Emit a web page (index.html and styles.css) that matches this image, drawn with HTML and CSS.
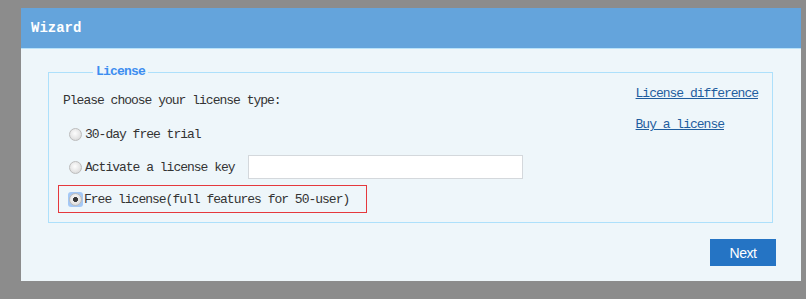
FILE: index.html
```html
<!DOCTYPE html>
<html lang="en">
<head>
    <meta charset="UTF-8">
    <meta name="viewport" content="width=device-width, initial-scale=1.0">
    <title>Wizard - License</title>
    <link rel="stylesheet" href="styles.css">
</head>
<body>
    <div class="panel">
        <div class="panel-header">Wizard</div>

        <div class="panel-body">
            <fieldset class="license-box">
                <legend>License</legend>

                <div class="license-layout">
                    <div class="license-options">
                        <p class="prompt">Please choose your license type:</p>

                        <label class="option">
                            <input type="radio" name="license">
                            <span>30-day free trial</span>
                        </label>

                        <label class="option">
                            <input type="radio" name="license">
                            <span>Activate a license key</span>
                            <input type="text" class="key-input">
                        </label>

                        <label class="option option-selected">
                            <span class="radio-focus"><input type="radio" name="license" checked></span>
                            <span>Free license(full features for 50-user)</span>
                        </label>
                    </div>

                    <div class="license-links">
                        <a href="#">License difference</a>
                        <a href="#">Buy a license</a>
                    </div>
                </div>
            </fieldset>

            <div class="actions">
                <button type="button" class="next-btn">Next</button>
            </div>
        </div>
    </div>
</body>
</html>
```

FILE: styles.css
```css
* {
    margin: 0;
    padding: 0;
    box-sizing: border-box;
}

body {
    height: 299px;
    overflow: hidden;
    background: #8c8c8c;
    font-family: 'Liberation Mono', 'DejaVu Sans Mono', monospace;
    font-size: 13px;
    letter-spacing: -1px;
    color: #333;
}

.panel {
    width: 780px;
    height: 273px;
    margin: 8px 0 0 21px;
    background: #eef6fa;
    display: flex;
    flex-direction: column;
}

.panel-header {
    height: 41px;
    padding-left: 10px;
    display: flex;
    align-items: center;
    background: #64a4dc;
    border-bottom: 1px solid #b8e2fa;
    color: #fff;
    font-size: 14px;
    font-weight: bold;
    letter-spacing: 0;
}

.panel-body {
    padding: 15px 28px 0 27px;
}

.license-box {
    border: 1px solid #ade0fb;
    padding: 0 14px 9px 14px;
    margin: 0;
    min-width: 0;
}

.license-box legend {
    margin-left: 30px;
    padding: 0 3px;
    line-height: 16px;
    color: #3d8ef0;
    font-weight: bold;
    letter-spacing: -0.8px;
}

.license-layout {
    display: flex;
    justify-content: space-between;
}

.prompt {
    line-height: 20px;
    margin-top: 11px;
}

.option {
    display: flex;
    align-items: center;
    height: 24px;
}

.prompt + .option {
    margin-top: 11px;
}

.option + .option {
    margin-top: 9px;
}

.option input[type="radio"] {
    appearance: none;
    -webkit-appearance: none;
    width: 13px;
    height: 13px;
    margin: 0 3px 0 6px;
    border: 1px solid #bcbcbc;
    border-radius: 50%;
    background: radial-gradient(circle at 45% 40%, #fdfdfd 0%, #e6e6e6 55%, #cfcfcf 100%);
    flex-shrink: 0;
}

.key-input {
    width: 275px;
    height: 24px;
    margin-left: 13px;
    border: 1px solid #d4d8dc;
    background: #fff;
    outline: none;
}

.option-selected {
    margin-left: -5px;
    width: 309px;
    height: 28px;
    padding-left: 9px;
    border: 1px solid #e5393d;
}

.option + .option-selected {
    margin-top: 6px;
}

.radio-focus {
    display: flex;
    align-items: center;
    justify-content: center;
    width: 15px;
    height: 15px;
    margin-right: 1px;
    border-radius: 3px;
    background: #a4c8f6;
}

.option .radio-focus input[type="radio"] {
    margin: 0;
    background:
        radial-gradient(circle, #3a3a3a 0, #3a3a3a 2.2px, transparent 2.8px),
        radial-gradient(circle at 45% 40%, #fdfdfd 0%, #e6e6e6 55%, #cfcfcf 100%);
}

.license-links {
    display: flex;
    flex-direction: column;
    padding-top: 4px;
}

.license-links a {
    line-height: 20px;
    color: #1f5d9e;
    text-decoration: underline;
}

.license-links a + a {
    margin-top: 11px;
}

.actions {
    display: flex;
    justify-content: flex-end;
    margin: 16px -3px 0 0;
}

.next-btn {
    width: 66px;
    height: 27px;
    border: none;
    background: #2574c4;
    color: #fff;
    font-family: 'Liberation Sans', Arial, sans-serif;
    font-size: 14px;
    letter-spacing: -0.5px;
    cursor: pointer;
}
```
